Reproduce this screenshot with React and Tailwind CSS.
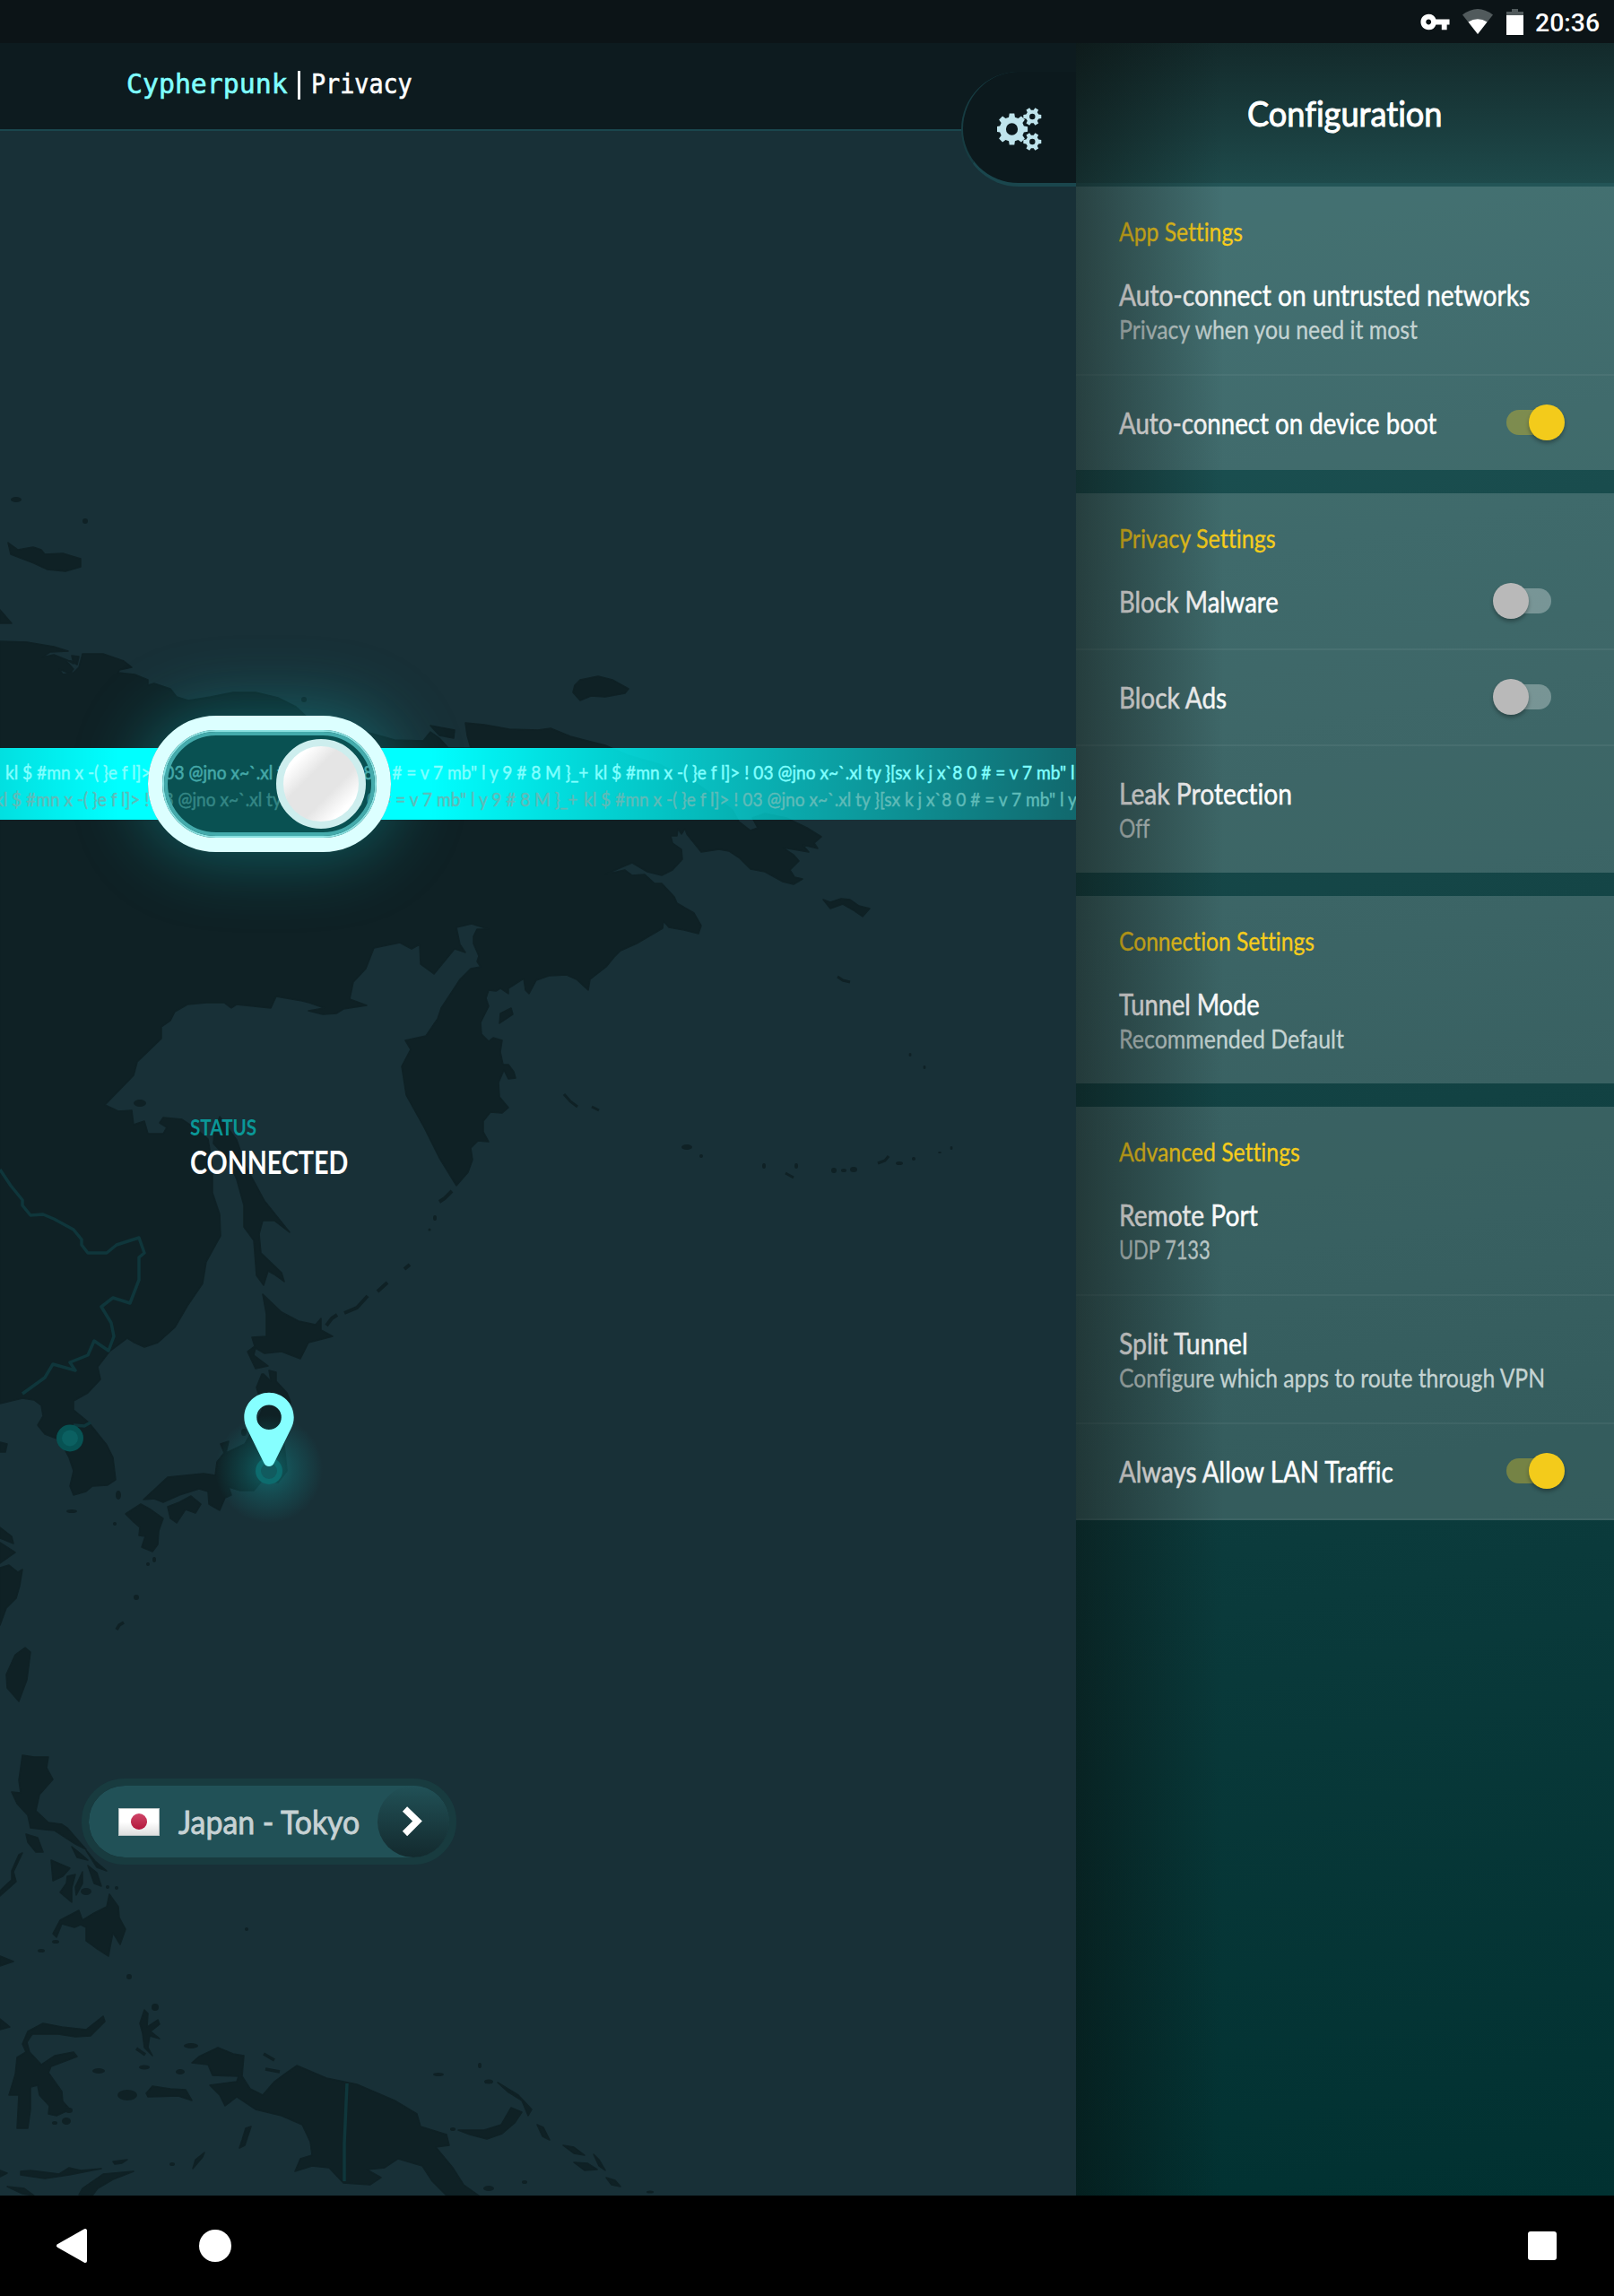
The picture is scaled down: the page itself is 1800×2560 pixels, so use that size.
import { useLayoutEffect, useRef, useState } from "react";
import { MdVpnKey } from "react-icons/md";

// Single line of text condensed or stretched to a given width.
function Fit({ w, className = "", children }) {
  const ref = useRef(null);
  const [scale, setScale] = useState(1);
  useLayoutEffect(() => {
    setScale(w / ref.current.offsetWidth);
  }, [w]);
  return (
    <span className={"block whitespace-nowrap " + className} style={{ width: w }}>
      <span ref={ref} className="inline-block origin-left" style={{ transform: `scaleX(${scale})` }}>
        {children}
      </span>
    </span>
  );
}

const LAND = [
  // Siberia, Kamchatka, Manchuria, Korea
  "0,715 30,716 60,721 76,726 56,727 47,733 60,730 75,736 82,740 80,731 88,732 86,741 79,737 73,736 82,746 78,751 66,746 70,752 82,750 88,744 92,729 115,729 138,737 147,744 133,747 132,750 150,752 165,758 165,764 172,762 190,768 197,777 210,781 235,777 260,772 285,772 310,778 330,788 345,802 415,818 440,825 472,826 480,816 490,823 500,834 525,834 521,820 519,806 540,808 568,813 600,814 614,812 636,821 659,827 675,831 700,842 735,852 775,872 817,903 824,916 837,926 845,923 839,912 853,907 877,912 900,923 916,933 908,940 912,946 895,942 902,950 873,945 885,953 891,960 881,970 886,978 895,980 885,986 873,983 853,972 837,969 825,957 813,949 802,947 782,950 774,940 766,930 764,924 760,930 756,924 755,932 748,932 750,940 760,947 761,958 750,970 738,976 722,972 705,962 693,967 675,975 697,970 705,976 719,975 730,985 738,985 752,1000 755,1007 774,1018 782,1032 779,1041 763,1037 746,1034 740,1027 739,1035 710,1052 692,1060 685,1067 676,1078 658,1092 656,1104 643,1092 632,1087 612,1088 598,1093 590,1108 586,1104 584,1091 567,1102 567,1108 558,1102 553,1105 545,1104 542,1113 545,1122 536,1140 537,1153 545,1161 550,1157 560,1160 558,1173 561,1187 567,1187 573,1195 575,1202 567,1203 562,1193 556,1207 557,1223 567,1235 560,1241 547,1240 539,1250 539,1262 545,1273 533,1272 525,1280 527,1293 522,1307 509,1322 490,1291 473,1257 453,1221 448,1189 458,1170 452,1160 475,1155 488,1136 492,1124 513,1092 525,1080 536,1078 532,1072 534,1066 528,1052 528,1044 532,1036 545,1036 526,1030 509,1034 513,1053 519,1062 507,1058 484,1086 469,1075 468,1053 459,1058 446,1051 417,1057 408,1080 394,1095 390,1114 409,1121 383,1125 375,1130 360,1131 344,1127 362,1124 345,1118 337,1116 308,1111 302,1124 264,1120 258,1124 250,1118 230,1118 209,1120 195,1128 190,1138 180,1145 180,1158 153,1184 149,1199 117,1232 132,1239 147,1238 149,1254 161,1250 165,1264 182,1264 186,1257 178,1252 182,1246 203,1248 218,1258 232,1270 237,1300 237,1330 245,1354 246,1378 230,1407 226,1431 209,1456 195,1480 176,1497 161,1502 150,1497 142,1492 122,1507 109,1524 112,1538 98,1553 82,1562 82,1572 99,1586 119,1611 126,1625 129,1650 120,1656 103,1657 96,1663 82,1667 78,1657 82,1640 77,1625 66,1605 50,1599 42,1589 48,1579 46,1567 38,1561 25,1559 0,1565",
  // Sakhalin
  "239,1262 245,1245 264,1271 274,1300 295,1339 323,1374 306,1361 293,1361 289,1376 291,1397 314,1419 317,1429 306,1421 299,1417 294,1433 286,1422 283,1383 272,1368 272,1344 264,1315 253,1291 238,1275",
  // Japan
  "293,1443 314,1463 333,1473 352,1477 358,1470 358,1483 371,1490 344,1497 335,1515 314,1507 295,1509 285,1503 283,1511 299,1523 285,1526 276,1507 284,1501 281,1491 297,1490 297,1465",
  "294,1532 302,1540 300,1528 308,1530 308,1540 320,1553 324,1563 322,1580 315,1597 318,1620 320,1640 310,1653 293,1650 283,1662 268,1662 255,1658 258,1667 251,1670 245,1684 233,1677 232,1663 222,1660 200,1667 182,1675 172,1671 160,1672 187,1647 227,1643 240,1645 242,1630 250,1620 246,1610 255,1607 252,1620 273,1610 283,1593 293,1570 286,1547 292,1532",
  "157,1677 168,1683 182,1693 177,1707 176,1722 170,1730 158,1725 162,1713 155,1712 156,1703 149,1697 140,1688",
  "213,1668 224,1677 218,1687 207,1683 197,1698 190,1693 187,1680 200,1675",
  // China coast and Taiwan
  "0,1703 13,1713 15,1721 0,1715", "0,1720 17,1731 0,1743", "0,1748 10,1745 20,1753 25,1750 22,1768 18,1782 7,1793 0,1812",
  "28,1837 34,1842 30,1873 21,1897 8,1882 7,1867 17,1845", "0,1608 8,1610 6,1619 0,1619",
  // Philippines
  "25,1957 38,1959 54,1959 52,1971 59,1984 44,2001 40,2019 54,2032 69,2034 75,2038 88,2053 96,2062 84,2056 61,2041 50,2040 34,2038 31,2024 19,2011 13,1998 23,1999 21,1985",
  "29,2045 42,2049 48,2065 40,2065 31,2054", "57,2074 78,2083 70,2092 59,2097", "80,2059 90,2067 98,2074 86,2071",
  "96,2063 106,2075 119,2086 108,2082", "98,2080 108,2088 113,2103 105,2100", "67,2110 74,2100 75,2092 84,2090 80,2105 80,2121",
  "92,2087 92,2100 85,2113 84,2104", "122,2112 132,2126 133,2138 140,2151 134,2168 126,2155 123,2170 121,2181 107,2172 96,2164 96,2149 90,2146 83,2149 69,2145 63,2160 59,2156 67,2141 88,2130 92,2141 105,2133 119,2126",
  "25,2066 15,2087 18,2098 0,2114 0,2108 13,2096 13,2086 21,2068", "0,2181 15,2187 0,2192", "0,2251 11,2260 0,2263",
  // Sulawesi, Moluccas
  "29,2288 25,2279 31,2265 48,2256 69,2260 96,2263 115,2248 117,2254 101,2270 84,2271 65,2268 36,2268 30,2277 33,2288 46,2302 61,2292 82,2288 86,2293 57,2304 54,2311 69,2332 70,2343 78,2352 63,2359 54,2357 55,2348 44,2336 42,2325 34,2327 34,2352 31,2373 19,2373 21,2336 10,2336 17,2313 19,2294",
  "161,2241 165,2245 164,2260 176,2252 178,2257 168,2265 178,2273 167,2270 165,2283 170,2292 161,2283 159,2267 156,2256",
  "163,2334 170,2326 190,2329 207,2330 214,2342 199,2337 165,2338",
  // New Guinea and Bismarck archipelago
  "214,2300 222,2293 243,2283 260,2290 272,2292 270,2315 279,2329 293,2336 306,2321 318,2312 331,2303 364,2317 398,2324 440,2342 465,2357 469,2371 498,2380 501,2392 486,2394 505,2417 517,2436 534,2448 498,2448 482,2432 471,2415 444,2407 429,2417 409,2419 425,2428 413,2436 383,2434 367,2417 348,2415 329,2421 335,2407 348,2403 346,2388 337,2369 314,2359 285,2352 264,2338 251,2348 245,2336 234,2325 264,2321 266,2315 237,2314 232,2302",
  "511,2375 540,2375 559,2369 570,2350 582,2355 574,2367 560,2379 543,2385 524,2380",
  "555,2322 578,2336 593,2352 589,2359 582,2342 566,2332",
  "270,2386 267,2395 273,2392 280,2371 274,2373", "215,2418 226,2405 228,2400 218,2408",
  // Solomon Islands
  "599,2369 606,2372 613,2386 605,2382", "628,2392 640,2394 652,2403 640,2401", "640,2411 655,2412 666,2419 652,2420",
  "662,2402 668,2408 675,2420 668,2415", "676,2428 686,2431 692,2438 682,2436",
  // Lesser Sunda islands
  "0,2420 8,2423 0,2427", "23,2421 34,2420 66,2424 77,2417 90,2420 113,2418 77,2425 50,2429 23,2425",
  "88,2447 92,2440 115,2424 149,2421 126,2430 109,2440 103,2448", "8,2438 27,2440 38,2448 25,2446", "126,2410 142,2408 136,2412 128,2413",
  // Arctic and Bering islands
  "639,772 641,764 647,758 667,754 683,758 701,768 697,773 675,777 659,776 647,781",
  "918,1003 926,1006 938,1002 948,1003 958,1010 970,1013 962,1022 952,1015 940,1008 926,1013",
  "9,605 20,613 37,610 46,613 50,618 70,617 90,623 90,632 73,637 53,635 38,628 12,618", "0,680 13,695 0,695",
  "480,809 507,814 506,823 490,820", "558,1130 570,1124 572,1131 557,1141",
];

const DOTS = [
  [18, 557, 6, 3], [95, 581, 3, 3], [96, 2109, 6, 4], [142, 2336, 11, 6], [213, 2281, 8, 3], [201, 2310, 5, 3], [110, 2309, 7, 3],
  [161, 2305, 6, 2.5], [173, 2238, 4, 4], [144, 2204, 3, 3], [80, 1685, 6, 2], [132, 1667, 3, 5], [128, 1699, 2, 2], [165, 1744, 2, 2],
  [172, 1739, 2, 3], [152, 1781, 3, 3], [62, 2165, 4, 2], [46, 2175, 4, 2], [130, 2105, 2, 2], [120, 2104, 2, 2], [77, 2353, 4, 3],
  [74, 2365, 5, 4], [61, 2367, 3, 2], [489, 2313, 6, 2], [535, 2303, 2, 3], [545, 2321, 5, 2.5], [545, 2440, 6, 3], [585, 2433, 3, 2],
  [485, 1358, 2, 3], [479, 1371, 1.5, 1.5], [766, 1279, 6, 3], [782, 1289, 2, 2], [852, 1300, 2, 3], [888, 1300, 2, 3], [930, 1305, 3, 3],
  [941, 1305, 3, 2], [952, 1304, 4, 3], [1003, 1297, 4, 2], [1019, 1292, 2, 2], [1048, 1285, 2, 1], [1061, 1280, 1.5, 2], [1015, 1176, 1.5, 2],
  [1031, 1190, 1.5, 2], [275, 2151, 2, 2], [192, 2413, 3, 2], [339, 780, 3, 3], [505, 2374, 3, 2], [156, 1230, 7, 4],
  [272, 1597, 3, 4], [725, 2444, 4, 1.5],
];

// Gear outline with square teeth
function gear(cx, cy, teeth, outer, inner, hole) {
  const pts = [];
  const step = (Math.PI * 2) / teeth;
  for (let i = 0; i < teeth; i++) {
    const a = i * step;
    [[-0.32, inner], [-0.2, outer], [0.2, outer], [0.32, inner]].forEach(([f, r]) => {
      pts.push(`${(cx + r * Math.cos(a + f * step)).toFixed(2)},${(cy + r * Math.sin(a + f * step)).toFixed(2)}`);
    });
  }
  return `M${pts.join("L")}ZM${cx - hole},${cy}a${hole},${hole} 0 1,0 ${hole * 2},0a${hole},${hole} 0 1,0 ${-hole * 2},0Z`;
}

function WorldMap() {
  return (
    <svg className="absolute inset-0" width="1200" height="2400" viewBox="0 48 1200 2400">
      <defs>
        <radialGradient id="pinGlow">
          <stop offset="0" stopColor="#10898c" stopOpacity="0.6" />
          <stop offset="0.5" stopColor="#10898c" stopOpacity="0.28" />
          <stop offset="1" stopColor="#10898c" stopOpacity="0" />
        </radialGradient>
      </defs>
      <g fill="#0f2125" stroke="#0f2125" strokeWidth="1.5" strokeLinejoin="round">
        {LAND.map((p, i) => <polygon key={i} points={p} />)}
        {DOTS.map(([x, y, rx, ry], i) => <ellipse key={i} cx={x} cy={y} rx={rx} ry={ry} stroke="none" />)}
      </g>
      <g fill="none" stroke="#0f2125" strokeWidth="4">
        <path d="M490,1340l6,-4 8,-8M384,1464l14,-6 12,-13M421,1440l11,-10M364,1478l6,-8 6,-4M451,1415l6,-5" />
        <path d="M629,1220l7,8 8,6M660,1234l8,4M934,1089l6,4 8,2M876,1308l9,5M979,1297l8,-3 4,-5" strokeWidth="3" />
        <path d="M130,1817l3,-5 5,-3M294,2290l12,7M296,2307l16,3M152,2284l10,7" strokeWidth="3.5" />
      </g>
      <g fill="none" stroke="#0f363b" strokeWidth="3.5" strokeLinejoin="round">
        <path d="M0,1304L12,1322 25,1338 25,1344 34,1355 48,1354 60,1359 82,1371 91,1382 91,1388 98,1397 119,1397 130,1388 155,1380 161,1397 155,1402 155,1427 145,1453 126,1447 113,1457 124,1475 127,1490 121,1506 105,1495 98,1511 78,1519 84,1528 59,1521 50,1536 25,1554" />
        <path d="M82,1589L94,1590 101,1586M387,2323L384,2390 384,2432" />
      </g>
      <g>
        <circle cx="78" cy="1603.5" r="15" fill="#075253" />
        <circle cx="78" cy="1603.5" r="9" fill="#0b6061" />
        <circle cx="300" cy="1638" r="60" fill="url(#pinGlow)" />
        <circle cx="300" cy="1640" r="15" fill="#0d6c6e" />
        <circle cx="300" cy="1640" r="9" fill="#115b5f" />
        <path
          fill="#86ffff"
          fillRule="evenodd"
          d="M300,1552.7c-15.3,0 -27.7,12.3 -27.7,27.5c0,5 1.2,8.600 3.2,12.700l18.500,37.500c2.500,6 9.500,6 12,0l18.500,-37.500c2,-4.100 3.200,-7.700 3.200,-12.700c0,-15.200 -12.400,-27.500 -27.700,-27.500ZM286.200,1580.200a13.800,13.800 0 1,1 27.600,0a13.800,13.800 0 1,1 -27.600,0Z"
        />
      </g>
    </svg>
  );
}

const NOISE = "kl $ #mn x -( }e f l]> ! 03 @jno x~`.xl ty }[sx k j x`8 0 # = v 7 mb\" l y 9 # 8 M }_+";

function NoiseLine({ className }) {
  return (
    <div className={"flex h-[30px] text-[22px] leading-[30px] [-webkit-text-stroke:0.5px_currentColor] " + className}>
      {[0, 1, 2].map((i) => (
        <div key={i} className="w-[657px] shrink-0">
          <Fit w={650}>{NOISE}</Fit>
        </div>
      ))}
    </div>
  );
}

function Stream() {
  return (
    <div className="relative mt-[688px] h-20">
      <div className="absolute -top-9 left-[165px] h-[152px] w-[271px] rounded-full shadow-[0_0_75px_8px_rgba(16,190,195,0.36)]" />
      <div className="absolute inset-0 bg-[linear-gradient(90deg,rgba(0,255,255,0.86)_0%,rgb(0,255,255)_11%,rgb(0,255,255)_40%,rgba(0,255,255,0.86)_51%,rgba(0,255,255,0.27)_100%)]" />
      <div className="absolute -top-9 left-[165px] h-[152px] w-[271px] rounded-full bg-[#095152]" />
      <div className="absolute inset-0 overflow-hidden pt-3">
        <NoiseLine className="ml-[-651px] text-[#80ffff]" />
        <NoiseLine className="ml-[-663px] text-[#5fbbb8]" />
      </div>
      <div className="absolute -top-9 left-[165px] h-[152px] w-[271px] rounded-full border-[16px] border-[#dcffff]">
        <div className="h-full w-full rounded-full border-2 border-[#8ae0e0]">
          <div className="h-full w-full rounded-full border-4 border-[#44abac] bg-[#095152]/50" />
        </div>
      </div>
      <div className="absolute -top-[10px] left-[308px] h-[100px] w-[100px] rounded-full border-8 border-[#cdeeee] bg-[linear-gradient(135deg,#ffffff_18%,#e5e5e5_38%,#e5e5e5_62%,#ffffff_82%)]" />
    </div>
  );
}

function Main() {
  return (
    <main className="relative h-[2400px] w-[1200px] overflow-hidden bg-[#183037]">
      <WorldMap />
      <div className="relative flex flex-col">
        <header className="flex h-[98px] border-b-2 border-[#1a464d] bg-[#0d1b1f] pl-[141px] pt-[26px] font-['DejaVu_Sans_Mono',monospace] text-[31px] leading-[38px] [-webkit-text-stroke:0.6px_currentColor]">
          <Fit w={180} className="text-[#80ffff]">Cypherpunk</Fit>
          <span className="ml-[11px] mt-[5px] h-[32px] w-[3px] bg-white" />
          <Fit w={113} className="ml-[12px] text-white">Privacy</Fit>
        </header>
        <div className="absolute right-0 top-8 h-32 w-32 rounded-l-full border-b-4 border-l-2 border-b-[#1a464d] border-l-[#173c42] bg-[#0c191d]">
          <svg className="absolute left-[38px] top-[40px]" width="50" height="50" viewBox="1112 120 50 50" fill="#bfe4ec" fillRule="evenodd">
            <path d={gear(1128.5, 144, 8, 17.8, 13.8, 6.6)} />
            <path d={gear(1151.300, 130, 6, 10.200, 7.300, 3.200)} />
            <path d={gear(1151.300, 158, 6, 10.200, 7.300, 3.200)} />
          </svg>
        </div>
        <Stream />
        <div className="ml-[212px] mt-[328px]">
          <Fit w={74} className="text-[24px] font-bold leading-[30px] text-[#0a9797]">STATUS</Fit>
          <Fit w={176} className="mt-[2px] text-[36px] font-bold leading-[42px] text-white">CONNECTED</Fit>
        </div>
        <div className="ml-[91px] mt-[667px] flex h-24 w-[418px] items-center rounded-full border-8 border-[#183b3f] bg-[#215157] bg-clip-padding pl-[33px]">
          <div className="flex h-[31px] w-[46px] items-center justify-center border border-[#b8c3c4] bg-linear-to-b from-white from-50% to-[#dedede]">
            <div className="h-[18px] w-[18px] rounded-full bg-linear-to-b from-[#cf4468] to-[#b3153c]" />
          </div>
          <Fit w={202} className="ml-[21px] text-[37px] leading-[44px] text-[#c7d2d4] [-webkit-text-stroke:0.9px_currentColor]">Japan - Tokyo</Fit>
          <div className="ml-auto flex h-20 w-20 items-center justify-center rounded-full bg-linear-to-b from-[#215157] to-[#132a2e]">
            <svg width="24" height="36" viewBox="0 0 24 36" fill="none" stroke="#fff" strokeWidth="7.500" className="mr-[2px]">
              <path d="M3.500,4L17.500,17.500 3.500,31.500" />
            </svg>
          </div>
        </div>
      </div>
    </main>
  );
}

const GROUPS = [
  { title: "App Settings", w: 138, rows: [
    { label: "Auto-connect on untrusted networks", w: 458, sub: "Privacy when you need it most", sw: 333 },
    { label: "Auto-connect on device boot", w: 354, toggle: "on" },
  ] },
  { title: "Privacy Settings", w: 175, rows: [
    { label: "Block Malware", w: 178, toggle: "off" },
    { label: "Block Ads", w: 120, toggle: "off" },
    { label: "Leak Protection", w: 193, sub: "Off", sw: 34 },
  ] },
  { title: "Connection Settings", w: 218, rows: [
    { label: "Tunnel Mode", w: 157, sub: "Recommended Default", sw: 251 },
  ] },
  { title: "Advanced Settings", w: 202, last: true, rows: [
    { label: "Remote Port", w: 155, sub: "UDP 7133", sw: 102 },
    { label: "Split Tunnel", w: 144, sub: "Configure which apps to route through VPN", sw: 475 },
    { label: "Always Allow LAN Traffic", w: 306, toggle: "on" },
  ] },
];

function Toggle({ on }) {
  return (
    <span className={"mb-px relative mr-[55px] flex h-10 w-20 items-center " + (on ? "justify-end" : "justify-start")}>
      <span className={"absolute left-[15px] top-[6px] h-7 w-[50px] rounded-full " + (on ? "bg-[#f2cb1a]/35" : "bg-white/30")} />
      <span className={"relative h-10 w-10 rounded-full shadow-[0_3px_4px_rgba(0,0,0,0.3)] " + (on ? "bg-[#f3cb1b]" : "bg-[#b9b9b9]")} />
    </span>
  );
}

function Row({ row, divider }) {
  return (
    <div className={"py-8 pl-12 " + (divider ? "border-b-2 border-white/[0.05]" : "")}>
      <div className="flex h-[41px] items-center justify-between">
        <Fit w={row.w} className="text-[33px] leading-[41px] text-white [-webkit-text-stroke:0.5px_currentColor]">{row.label}</Fit>
        {row.toggle && <Toggle on={row.toggle === "on"} />}
      </div>
      {row.sub && <Fit w={row.sw} className="text-[29px] leading-[36px] text-[#c4d3d2] [-webkit-text-stroke:0.3px_currentColor]">{row.sub}</Fit>}
    </div>
  );
}

function Panel() {
  return (
    <aside className="relative h-[2400px] w-[600px] bg-[linear-gradient(170deg,#20585a_0%,#194c4d_24%,#124243_50%,#0a3a3b_71%,#013131_100%)]">
      <header className="h-40 border-b-4 border-[#235557] bg-linear-to-b from-[#132a2b] to-[#1e4a4b] pt-[54px]">
        <Fit w={218} className="mx-auto text-[39px] leading-[48px] text-white [-webkit-text-stroke:1px_currentColor]">Configuration</Fit>
      </header>
      <div className="flex flex-col gap-[26px]">
        {GROUPS.map((g) => (
          <section key={g.title} className="bg-white/[0.17] pt-8">
            <Fit w={g.w} className="ml-12 text-[29px] leading-[36px] text-[#f6cd1b] [-webkit-text-stroke:0.3px_currentColor]">{g.title}</Fit>
            {g.rows.map((r, i) => <Row key={r.label} row={r} divider={g.last || i < g.rows.length - 1} />)}
          </section>
        ))}
      </div>
      <div className="pointer-events-none absolute inset-y-0 left-0 w-[165px] bg-[linear-gradient(90deg,rgba(8,10,9,0.46),rgba(8,10,9,0.25)_45%,rgba(8,10,9,0)_100%)]" />
    </aside>
  );
}

export default function App() {
  return (
    <div className="flex h-[2560px] w-[1800px] flex-col overflow-hidden bg-black font-['Lato',sans-serif] [font-variant-ligatures:none]">
      <div className="flex h-12 items-center bg-[#0c1417] pl-[1583px]">
        <MdVpnKey size={35} color="#fff" />
        <svg className="ml-[13px]" width="34" height="28" viewBox="0 0 34 28">
          <path d="M17,28L0,6.500Q17,-6.500 34,6.500Z" fill="#515a5c" />
          <path d="M17,28L6.500,14.500Q17,8 27.500,14.500Z" fill="#fff" />
        </svg>
        <svg className="ml-[15px]" width="19" height="29" viewBox="0 0 19 29">
          <path d="M6,0H13V3H19V8H0V3H6Z" fill="#515a5c" />
          <path d="M0,7H19V29H0Z" fill="#fff" />
        </svg>
        <Fit w={72} className="ml-[13px] mt-[3px] font-['Roboto',sans-serif] text-[28px] font-medium leading-[36px] text-white">20:36</Fit>
      </div>
      <div className="flex">
        <Main />
        <Panel />
      </div>
      <nav className="flex h-28 items-center pl-[62px] pr-[64px]">
        <svg width="35" height="40" viewBox="0 0 35 40" fill="#fff" stroke="#fff" strokeWidth="4" strokeLinejoin="round">
          <path d="M33,3V37L3,20Z" />
        </svg>
        <span className="ml-[125px] h-9 w-9 rounded-full bg-white" />
        <span className="ml-auto h-8 w-8 rounded-[3px] bg-white" />
      </nav>
    </div>
  );
}
